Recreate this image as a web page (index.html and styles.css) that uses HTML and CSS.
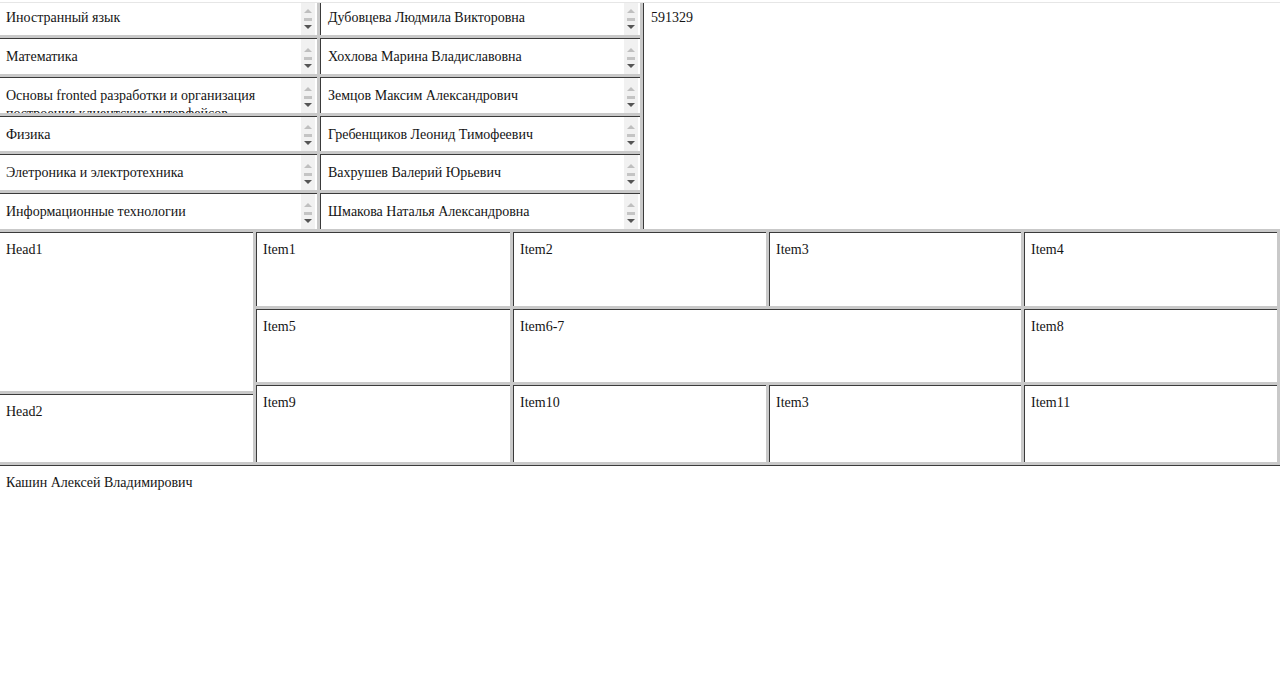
FILE: index.html
```html
<!DOCTYPE html>
<html lang="ru">
<head>
<meta charset="utf-8">
<title>Расписание</title>
<link rel="stylesheet" href="styles.css">
</head>
<body>
<div class="topline"></div>
<div class="top">
  <div class="code">591329</div>

  <div class="cell first"><span class="txt">Иностранный язык</span><span class="sb"><i class="up"></i><i class="thumb"></i><i class="dn"></i></span></div>
  <div class="cell first bl"><span class="txt">Дубовцева Людмила Викторовна</span><span class="sb"><i class="up"></i><i class="thumb"></i><i class="dn"></i></span></div>

  <div class="cell bt"><span class="txt">Математика</span><span class="sb"><i class="up"></i><i class="thumb"></i><i class="dn"></i></span></div>
  <div class="cell bt bl"><span class="txt">Хохлова Марина Владиславовна</span><span class="sb"><i class="up"></i><i class="thumb"></i><i class="dn"></i></span></div>

  <div class="cell bt"><span class="txt long">Основы fronted разработки и организация построения клиентских интерфейсов</span><span class="sb"><i class="up"></i><i class="thumb"></i><i class="dn"></i></span></div>
  <div class="cell bt bl"><span class="txt">Земцов Максим Александрович</span><span class="sb"><i class="up"></i><i class="thumb"></i><i class="dn"></i></span></div>

  <div class="cell bt"><span class="txt">Физика</span><span class="sb"><i class="up"></i><i class="thumb"></i><i class="dn"></i></span></div>
  <div class="cell bt bl"><span class="txt">Гребенщиков Леонид Тимофеевич</span><span class="sb"><i class="up"></i><i class="thumb"></i><i class="dn"></i></span></div>

  <div class="cell bt"><span class="txt">Элетроника и электротехника</span><span class="sb"><i class="up"></i><i class="thumb"></i><i class="dn"></i></span></div>
  <div class="cell bt bl"><span class="txt">Вахрушев Валерий Юрьевич</span><span class="sb"><i class="up"></i><i class="thumb"></i><i class="dn"></i></span></div>

  <div class="cell bt"><span class="txt">Информационные технологии</span><span class="sb"><i class="up"></i><i class="thumb"></i><i class="dn"></i></span></div>
  <div class="cell bt bl"><span class="txt">Шмакова Наталья Александровна</span><span class="sb"><i class="up"></i><i class="thumb"></i><i class="dn"></i></span></div>
</div>

<div class="sched">
  <div class="heads">
    <div class="box">Head1</div>
    <div class="box">Head2</div>
  </div>
  <div class="box">Item1</div>
  <div class="box">Item2</div>
  <div class="box">Item3</div>
  <div class="box">Item4</div>
  <div class="box">Item5</div>
  <div class="box wide">Item6-7</div>
  <div class="box">Item8</div>
  <div class="box">Item9</div>
  <div class="box">Item10</div>
  <div class="box">Item3</div>
  <div class="box">Item11</div>
</div>

<div class="footer">Кашин Алексей Владимирович</div>
</body>
</html>
```

FILE: styles.css
```css
* {
  box-sizing: border-box;
}

html,
body {
  margin: 0;
  padding: 0;
}

body {
  height: 695px;
  overflow: hidden;
  display: flex;
  flex-direction: column;
  background: #fff;
  color: #141414;
  font-family: "Liberation Serif", "Times New Roman", serif;
  font-size: 14px;
  line-height: 16px;
}

.topline {
  flex: none;
  height: 3px;
  border-bottom: 1px solid #e6e6e6;
}

/* top frameset: subjects | teachers | code */
.top {
  flex: none;
  height: 229px;
  display: grid;
  grid-template-columns: 317px 320px 1fr;
  grid-template-rows: 32px repeat(5, 1fr);
  gap: 3px;
  padding-bottom: 3px;
  background: #c9c9c9;
}

.code {
  grid-column: 3;
  grid-row: 1 / -1;
  background: #fff;
  border-left: 1px solid #3a3a3a;
  padding: 7px 7px 0 7px;
}

.cell {
  display: flex;
  min-height: 0;
  overflow: hidden;
  background: #fff;
}

.cell .txt {
  flex: 1;
  min-width: 0;
  padding: 10px 6px 0 6px;
}

.cell .txt.long {
  line-height: 18px;
  padding-top: 9px;
}

.cell.first .txt {
  padding-top: 7px;
}

.bt {
  border-top: 1px solid #3a3a3a;
}

.bl {
  border-left: 1px solid #3a3a3a;
}

.cell.bl .txt {
  padding-left: 7px;
}

/* fake classic scrollbar */
.sb {
  flex: none;
  width: 14px;
  margin-right: 2px;
  background: #f1f1f1;
  display: flex;
  flex-direction: column;
  align-items: center;
  justify-content: flex-end;
  padding-bottom: 6px;
}

.sb i {
  display: block;
}

.up {
  width: 0;
  height: 0;
  border-left: 4px solid transparent;
  border-right: 4px solid transparent;
  border-bottom: 4px solid #bfbfbf;
  margin-bottom: 5px;
}

.thumb {
  width: 8px;
  height: 3px;
  background: #c4c4c4;
  margin-bottom: 4px;
}

.dn {
  width: 0;
  height: 0;
  border-left: 4px solid transparent;
  border-right: 4px solid transparent;
  border-top: 4px solid #555;
}

/* middle frameset: schedule grid */
.sched {
  flex: none;
  height: 233px;
  display: grid;
  grid-template-columns: 253px 254px 253px 252px 253px;
  grid-template-rows: 74px 73px 1fr;
  gap: 3px;
  padding: 0 3px 3px 0;
  background: #c9c9c9;
}

.heads {
  grid-column: 1;
  grid-row: 1 / -1;
  display: grid;
  grid-template-rows: 159px 1fr;
  gap: 3px;
}

.box {
  background: #fff;
  border-top: 1px solid #3a3a3a;
  border-left: 1px solid #3a3a3a;
  padding: 9px 6px 0 6px;
}

.heads .box {
  border-left: 0;
  padding-left: 6px;
}

.wide {
  grid-column: span 2;
}

/* bottom frame */
.footer {
  flex: 1;
  background: #fff;
  border-top: 1px solid #3a3a3a;
  padding: 9px 6px 0 6px;
}
```
